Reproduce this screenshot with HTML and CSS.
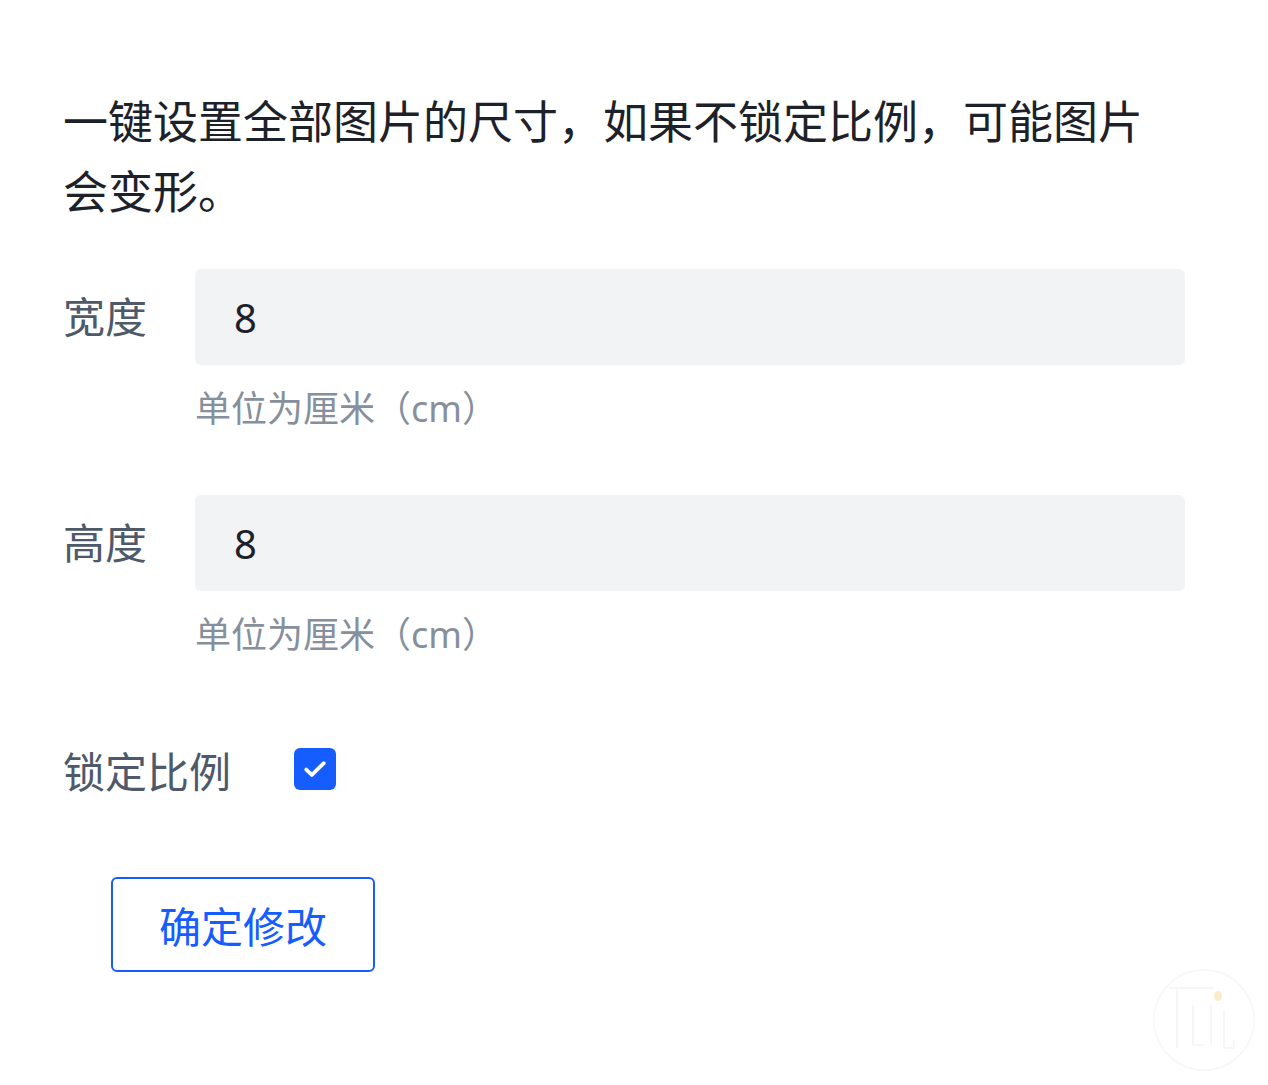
FILE: index.html
```html
<!DOCTYPE html>
<html lang="zh-CN">
<head>
    <meta charset="UTF-8">
    <meta name="viewport" content="width=device-width, initial-scale=1.0">
    <title>批量设置尺寸</title>
    <link rel="stylesheet" href="styles.css">
</head>
<body>
    <div class="container">
        <p class="intro">一键设置全部图片的尺寸，如果不锁定比例，可能图片会变形。</p>
        <form id="sizeForm">
            <div class="form-row">
                <label for="width">宽度</label>
                <div class="field">
                    <input type="text" id="width" name="width" value="8">
                    <div class="hint">单位为厘米（cm）</div>
                </div>
            </div>
            <div class="form-row">
                <label for="height">高度</label>
                <div class="field">
                    <input type="text" id="height" name="height" value="8">
                    <div class="hint">单位为厘米（cm）</div>
                </div>
            </div>
            <div class="check-row">
                <span class="check-label">锁定比例</span>
                <span class="checkbox">
                    <svg class="check-icon" viewBox="0 0 24 24"><path d="M4.5 12.5l4.8 4.6L19.5 7" fill="none" stroke="#fff" stroke-width="3.2" stroke-linecap="round" stroke-linejoin="round"/></svg>
                </span>
            </div>
            <button type="button" class="submit-btn">确定修改</button>
        </form>
    </div>
    <div class="watermark">
        <svg width="110" height="110" viewBox="0 0 110 110">
            <circle cx="55" cy="55" r="50" fill="none" stroke="#f6f6f6" stroke-width="1.5"/>
            <path d="M20 23h45M28 23v60M44 40v40h12M62 40v40M75 45v38h10v-8" fill="none" stroke="#f6f6f6" stroke-width="2"/>
            <ellipse cx="69" cy="31" rx="4" ry="5" fill="#fcebc8"/>
        </svg>
    </div>
</body>
</html>
```

FILE: styles.css
```css
* {
    box-sizing: border-box;
}
body {
    font-family: "Noto Sans", "Noto Sans CJK SC", sans-serif;
    background-color: #fff;
    margin: 0;
    padding: 87px 83px 0 63px;
}
.container {
    width: 1122px;
}
.intro {
    margin: 0;
    font-size: 45px;
    line-height: 70px;
    color: #1d2129;
}
#sizeForm {
    margin-top: 42px;
}
.form-row {
    display: flex;
    margin-bottom: 58px;
}
.form-row label {
    width: 132px;
    flex-shrink: 0;
    height: 96px;
    line-height: 96px;
    font-size: 42px;
    color: #4e5969;
}
.field {
    flex: 1;
}
.field input {
    display: block;
    width: 100%;
    height: 96px;
    padding: 0 39px;
    border: none;
    border-radius: 6px;
    background-color: #f2f3f5;
    font-family: "Noto Sans", "Noto Sans CJK SC", sans-serif;
    font-size: 40px;
    color: #1d2129;
    outline: none;
}
.hint {
    margin-top: 16px;
    font-size: 36px;
    line-height: 56px;
    color: #86909c;
}
.check-row {
    display: flex;
    align-items: center;
    margin-top: 78px;
    height: 56px;
}
.check-label {
    font-size: 42px;
    color: #4e5969;
}
.checkbox {
    display: flex;
    align-items: center;
    justify-content: center;
    flex-shrink: 0;
    width: 42px;
    height: 42px;
    margin-left: 63px;
    border-radius: 6px;
    background-color: #165dff;
}
.check-icon {
    width: 28px;
    height: 28px;
    flex-shrink: 0;
}
.submit-btn {
    display: block;
    width: 264px;
    height: 95px;
    margin: 80px 0 0 48px;
    background-color: #fff;
    border: 2px solid #165dff;
    border-radius: 6px;
    color: #165dff;
    font-family: "Noto Sans", "Noto Sans CJK SC", sans-serif;
    font-size: 42px;
    cursor: pointer;
}
.watermark {
    position: absolute;
    left: 1149px;
    top: 965px;
}
```
